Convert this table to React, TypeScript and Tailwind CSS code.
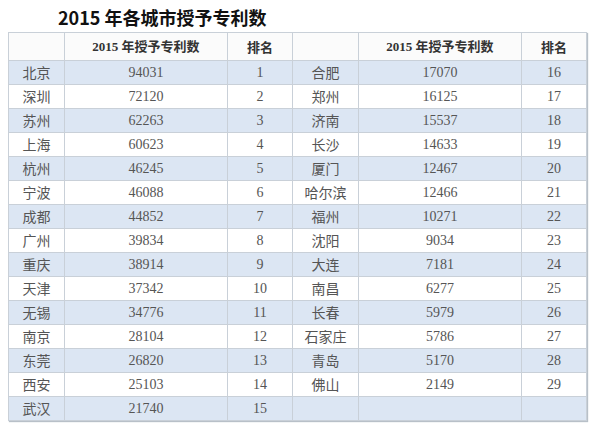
const left: [string, number, number][] = [
  ['北京', 94031, 1],
  ['深圳', 72120, 2],
  ['苏州', 62263, 3],
  ['上海', 60623, 4],
  ['杭州', 46245, 5],
  ['宁波', 46088, 6],
  ['成都', 44852, 7],
  ['广州', 39834, 8],
  ['重庆', 38914, 9],
  ['天津', 37342, 10],
  ['无锡', 34776, 11],
  ['南京', 28104, 12],
  ['东莞', 26820, 13],
  ['西安', 25103, 14],
  ['武汉', 21740, 15],
];

const right: ([string, number, number] | null)[] = [
  ['合肥', 17070, 16],
  ['郑州', 16125, 17],
  ['济南', 15537, 18],
  ['长沙', 14633, 19],
  ['厦门', 12467, 20],
  ['哈尔滨', 12466, 21],
  ['福州', 10271, 22],
  ['沈阳', 9034, 23],
  ['大连', 7181, 24],
  ['南昌', 6277, 25],
  ['长春', 5979, 26],
  ['石家庄', 5786, 27],
  ['青岛', 5170, 28],
  ['佛山', 2149, 29],
  null,
];

const serif = "font-['Liberation_Serif','Noto_Sans_CJK_SC',serif]";
const cjk = "font-['Noto_Sans_CJK_SC',sans-serif]";
const cell = 'border border-[#c9d0d8] p-0 text-center';

export default function App() {
  return (
    <div className="w-[600px] h-[428px] bg-white overflow-hidden">
      <h1 className={`pl-[58px] pt-[5px] h-[32px] text-[18px] leading-[24px] font-bold text-[#111] ${cjk}`}>
        2015 年各城市授予专利数
      </h1>
      <table className="ml-[8px] border-collapse table-fixed w-[578px] shadow-[1px_1px_1px_#b8c0c8] text-[#555]">
        <colgroup>
          <col className="w-[56px]" />
          <col className="w-[163px]" />
          <col className="w-[65px]" />
          <col className="w-[66px]" />
          <col className="w-[163px]" />
          <col className="w-[65px]" />
        </colgroup>
        <thead>
          <tr className="h-[28px] bg-[#fbfbfb] text-[#333] text-[13px] font-bold">
            <th className={cell}></th>
            <th className={`${cell} ${serif}`}>2015 年授予专利数</th>
            <th className={`${cell} ${cjk}`}>排名</th>
            <th className={cell}></th>
            <th className={`${cell} ${serif}`}>2015 年授予专利数</th>
            <th className={`${cell} ${cjk}`}>排名</th>
          </tr>
        </thead>
        <tbody>
          {left.map((l, i) => {
            const r = right[i];
            return (
              <tr key={l[0]} className={`h-[24px] ${i % 2 === 0 ? 'bg-[#dce6f3]' : 'bg-white'}`}>
                <td className={`${cell} ${cjk} text-[14px]`}>{l[0]}</td>
                <td className={`${cell} ${serif} text-[14px]`}>{l[1]}</td>
                <td className={`${cell} ${serif} text-[14px]`}>{l[2]}</td>
                <td className={`${cell} ${cjk} text-[14px]`}>{r ? r[0] : ''}</td>
                <td className={`${cell} ${serif} text-[14px]`}>{r ? r[1] : ''}</td>
                <td className={`${cell} ${serif} text-[14px]`}>{r ? r[2] : ''}</td>
              </tr>
            );
          })}
        </tbody>
      </table>
    </div>
  );
}
